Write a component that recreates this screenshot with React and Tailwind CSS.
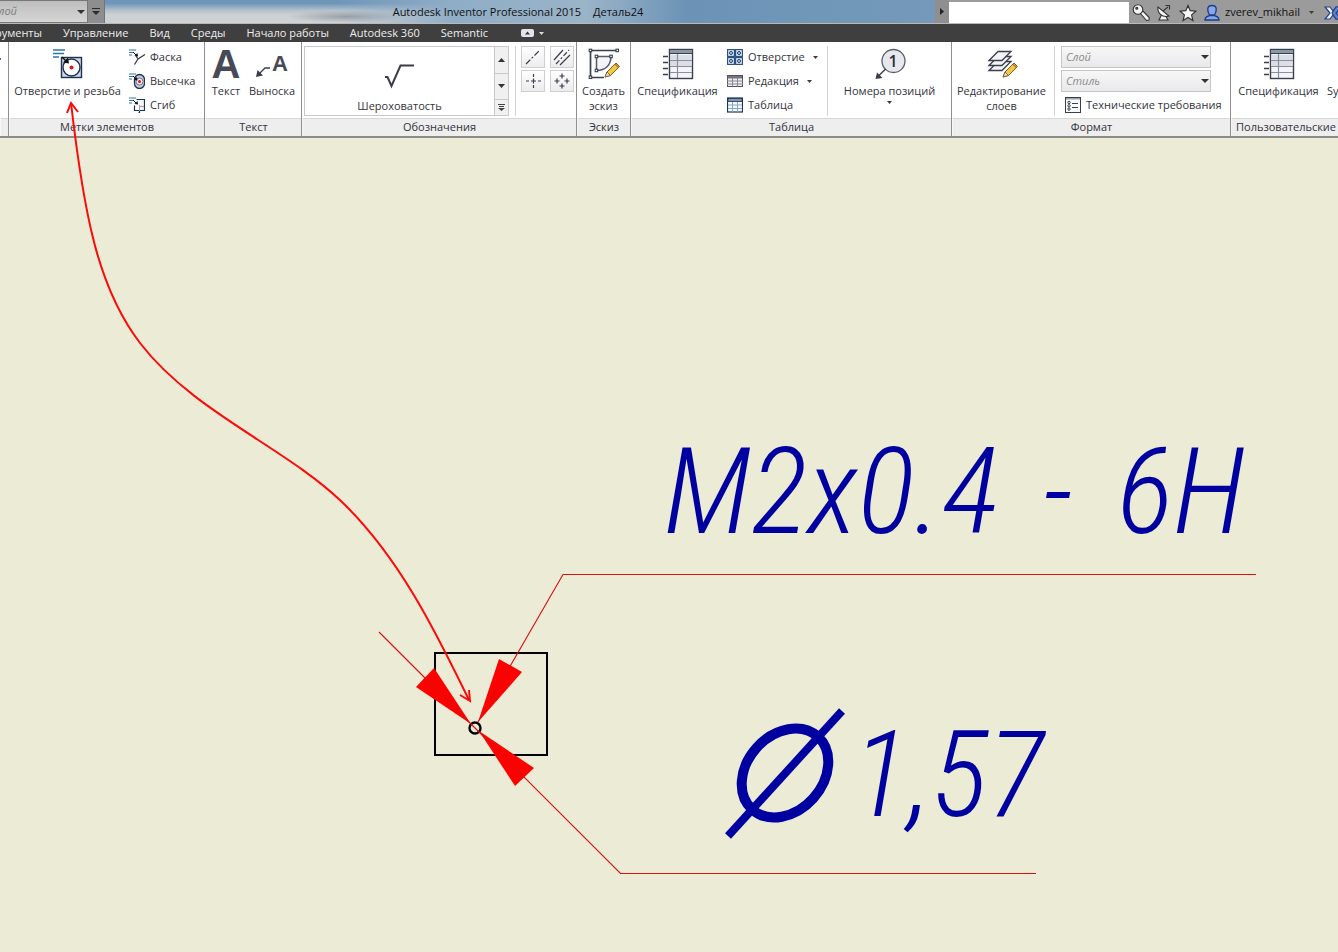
import React, { useState } from 'react';

const INK = '#3b3e4c';
const NAVY = '#1f3150';

function Caret({ className = '' }) {
  return (
    <svg width="5" height="3" viewBox="0 0 5 3" className={className} aria-hidden="true">
      <path d="M0 0h5L2.5 3z" fill="#3c3c3c" />
    </svg>
  );
}

function HoleIcon() {
  return (
    <svg width="32" height="32" viewBox="0 0 32 32" fill="none">
      <path d="M1 2h12M1 5.5h11M1 9h6" stroke="#2a76ae" strokeWidth="1.6" />
      <rect x="9.5" y="9.5" width="20" height="20" fill="#cfd5e4" stroke={NAVY} strokeWidth="1.4" />
      <circle cx="19.5" cy="19.5" r="8.5" fill="#fff" stroke={NAVY} strokeWidth="1.4" />
      <circle cx="19.5" cy="19.5" r="2" fill="#d41a1a" />
      <path d="M10 9l5 5" stroke="#111" strokeWidth="1.4" />
      <path d="M17 15.5l-6-1 5-5z" fill="#111" />
    </svg>
  );
}

function ChamferIcon() {
  return (
    <svg width="16" height="16" viewBox="0 0 16 16" fill="none">
      <path d="M0 1h7M0 3.5h5M0 6h3" stroke="#2a76ae" />
      <path d="M16 5.5L9 10 5.5 15.5M9 10L7 7" stroke={INK} strokeWidth="1.3" />
      <path d="M4 3l3 3" stroke="#111" />
      <path d="M9 7.5L5.5 7l3-3z" fill="#111" />
    </svg>
  );
}

function PunchIcon() {
  return (
    <svg width="16" height="16" viewBox="0 0 16 16" fill="none">
      <path d="M0 1h7M0 3.5h5M0 6h3" stroke="#2a76ae" />
      <rect x="5.5" y="1.5" width="10" height="14" rx="5" fill="#c5cad6" stroke={NAVY} strokeWidth="1.3" />
      <circle cx="10.5" cy="8.5" r="3.5" fill="#eef" stroke="#6d7486" />
      <circle cx="10.5" cy="8.5" r="1.5" fill="#d41a1a" />
      <path d="M4 3l3 3" stroke="#111" />
      <path d="M8.5 7.5L5 7l3-3z" fill="#111" />
    </svg>
  );
}

function BendIcon() {
  return (
    <svg width="16" height="16" viewBox="0 0 16 16" fill="none">
      <path d="M0 1h7M0 3.5h5M0 6h3" stroke="#2a76ae" />
      <path d="M7.500 2.5h8v11h-5" stroke={NAVY} strokeWidth="1.2" fill="#f2f4f8" />
      <path d="M5.5 8.500v5h5v2h-1" stroke={NAVY} strokeWidth="1.2" />
      <path d="M10.5 8v6M10.5 9.5h4.5" stroke="#9aa0ae" />
      <path d="M4 3l3 3" stroke="#111" />
      <path d="M9 7.5L5.5 7l3-3z" fill="#111" />
    </svg>
  );
}

function Pencil() {
  return (
    <g>
      <path d="M17 29l2-5 9-9 3.5 3.5-9 9z" fill="#f3c944" stroke="#7a5d20" />
      <path d="M17 29l2-5 3.5 3.5z" fill="#f2dcc0" stroke="#6b5640" strokeWidth=".8" />
      <path d="M27 16l3.5 3.5" stroke="#b9762c" strokeWidth="1.5" />
    </g>
  );
}

function SketchIcon() {
  return (
    <svg width="32" height="32" viewBox="0 0 32 32" fill="none">
      <path d="M29 2.5H2.5v27H16" stroke={INK} strokeWidth="1.7" />
      <path d="M8.5 8.5H23c0 8-5 14-14.5 14z" stroke="#555a70" strokeWidth="1.5" fill="#f4f4f8" />
      <g fill="#fff" stroke={INK} strokeWidth="1.1">
        <rect x="1.2" y="1.2" width="2.5" height="2.5" />
        <rect x="28" y="1.2" width="2.5" height="2.5" />
        <rect x="1.2" y="28" width="2.5" height="2.5" />
        <rect x="7.2" y="7.2" width="2.5" height="2.5" />
        <rect x="21.8" y="7.2" width="2.5" height="2.5" />
        <rect x="7.2" y="21.2" width="2.5" height="2.5" />
      </g>
      <Pencil />
    </svg>
  );
}

function PartsListIcon() {
  return (
    <svg width="32" height="32" viewBox="0 0 32 32" fill="none">
      <path d="M1 8.5h5M1 14.5h5M1 20.5h5M1 26.5h5" stroke={INK} strokeWidth="1.3" />
      <rect x="7.5" y="1.5" width="23" height="29" fill="#f4f5f8" stroke={INK} strokeWidth="1.4" />
      <path d="M7.5 1.5h23v4h-23z" fill="#8798a6" stroke={INK} />
      <path d="M8.5 7h21v11h-21z" fill="#dcdee6" />
      <path d="M8 12.5h22M8 18.5h22M8 24.5h22M15.5 6v24" stroke="#8b8f9d" strokeWidth="1.2" />
    </svg>
  );
}

function HoleTableIcon() {
  return (
    <svg width="16" height="16" viewBox="0 0 16 16" fill="none">
      {[[0, 0], [8, 0], [0, 8], [8, 8]].map(([x, y]) => (
        <g key={`${x}-${y}`}>
          <rect x={x + 0.6} y={y + 0.6} width="6.8" height="6.8" fill="#dbe7f7" stroke="#21497c" strokeWidth="1.1" />
          <circle cx={x + 4} cy={y + 4} r="1.5" stroke="#173a68" />
        </g>
      ))}
    </svg>
  );
}

function RevisionIcon() {
  return (
    <svg width="16" height="16" viewBox="0 0 16 16" fill="none">
      <rect x=".5" y="2.5" width="15" height="11" fill="#f1eef0" stroke="#54525e" />
      <path d="M1 3h14v2.5H1z" fill="#77737f" />
      <path d="M0 8h16M0 11h16M5.5 5v8.5M10.5 5v8.5" stroke="#8a8692" />
    </svg>
  );
}

function TableIcon() {
  return (
    <svg width="16" height="16" viewBox="0 0 16 16" fill="none">
      <rect x=".5" y="1" width="15" height="14" fill="#f7fafd" stroke={NAVY} strokeWidth="1.2" />
      <path d="M1 1.5h14v3H1z" fill="#7d98b2" stroke={NAVY} strokeWidth=".8" />
      <path d="M1 8h14M1 11.5h14M5.5 5v10M10.5 5v10" stroke="#87a6c6" />
    </svg>
  );
}

function BalloonIcon() {
  return (
    <div className="relative h-8 w-8">
      <svg width="32" height="32" viewBox="0 0 32 32" fill="none">
        <circle cx="19.5" cy="13" r="11.5" fill="#e6e8ee" stroke="#5a5d68" strokeWidth="1.3" />
        <path d="M11.5 21l-7 7" stroke={INK} strokeWidth="1.5" />
        <path d="M1.5 31L3 24.5l5.5 5.5z" fill={INK} />
      </svg>
      <span className="absolute left-[15px] top-1 text-base font-semibold leading-[18px] text-[#2c2e38]">1</span>
    </div>
  );
}

function LayersIcon() {
  return (
    <svg width="32" height="32" viewBox="0 0 32 32" fill="none">
      <g fill="#f3f4f7" stroke={INK} strokeWidth="1.3">
        <path d="M3 22.5l9-9h13l-9 9z" />
        <path d="M3 17.5l9-9h13l-9 9z" />
        <path d="M3 12.5l9-9h13l-9 9z" />
      </g>
      <Pencil />
    </svg>
  );
}

function RequirementsIcon() {
  return (
    <svg width="16" height="16" viewBox="0 0 16 16" fill="none">
      <rect x=".5" y=".5" width="15" height="15" fill="#fbfbfc" stroke={INK} />
      <path d="M1 1h14v1.5H1z" fill="#9a9dab" />
      <circle cx="4" cy="5.5" r="1.2" stroke={INK} />
      <circle cx="4" cy="8.8" r="1.2" stroke={INK} />
      <circle cx="4" cy="12.1" r="1.2" stroke={INK} />
      <path d="M7 6.5h6M7 10.5h6" stroke={INK} />
    </svg>
  );
}

function BigButton({ icon, label, lines, caret, className = '' }) {
  return (
    <button className={`flex shrink-0 flex-col items-center pt-[6px] ${className}`}>
      {icon}
      <span className="mt-[3px] whitespace-nowrap leading-[15px]">{label}</span>
      {lines && <span className="whitespace-nowrap leading-[15px]">{lines}</span>}
      {caret && <Caret className="mt-[3px]" />}
    </button>
  );
}

function SmallButton({ icon, label, caret }) {
  return (
    <button className="flex h-6 items-center gap-1 whitespace-nowrap">
      {icon}
      <span className="ml-px">{label}</span>
      {caret && <Caret className="ml-1" />}
    </button>
  );
}

function Panel({ title, className = '', children }) {
  return (
    <section className={`flex shrink-0 flex-col border-r border-[#8f8f8f] ${className}`}>
      <div className="flex h-[76px] bg-white">{children}</div>
      <h2 className="ml-px h-[18px] overflow-hidden whitespace-nowrap border-t border-[#d8d8d8] bg-[#eeeeee] text-center leading-[15px]">
        {title}
      </h2>
    </section>
  );
}

function LayerSelect({ label }) {
  return (
    <div className="relative h-[22px] w-[150px] shrink-0">
      <select
        aria-label={label}
        className="h-full w-full appearance-none border border-[#c6c6c6] bg-linear-to-b from-[#f7f7f7] to-[#e9e9ec] pl-1 italic text-[#8a8a8a] outline-none"
      >
        <option>{label}</option>
      </select>
      <svg width="8" height="4" viewBox="0 0 8 4" className="pointer-events-none absolute right-[2px] top-[9px]">
        <path d="M0 0h8L4 4z" fill="#333" />
      </svg>
    </div>
  );
}

function ToolButton({ label, children }) {
  return (
    <button aria-label={label} className="flex h-[22px] w-6 items-center justify-center border border-[#cfcfcf] bg-linear-to-b from-white to-[#ececee]">
      <svg width="18" height="18" viewBox="0 0 18 18" fill="none" stroke={INK} strokeWidth="1.2">
        {children}
      </svg>
    </button>
  );
}

function TitleBar() {
  return (
    <header className="flex h-6 border-b border-[#b9b9b9] bg-[#9b9b9b] text-[#111]">
      <div className="flex w-[105px] shrink-0 border-r border-[#6d7680]">
        <div className="relative flex w-[88px] overflow-hidden border-y border-r border-[#777] bg-linear-to-b from-[#bdbdbd] to-[#d6d6d6]">
          <select aria-label="Слой" className="-ml-2 h-full w-24 appearance-none italic text-[#7d7d7d] outline-none">
            <option>Слой</option>
          </select>
          <svg width="8" height="4" viewBox="0 0 8 4" className="pointer-events-none absolute right-[2px] top-[9px]">
            <path d="M0 0h8L4 4z" fill="#333" />
          </svg>
        </div>
        <button aria-label="Настройка панели" className="flex flex-1 items-center justify-center bg-[#8e8e8e]">
          <svg width="8" height="7" viewBox="0 0 8 7">
            <path d="M0 0h8v1H0zM0 3h8L4 7z" fill="#2b2b2b" />
          </svg>
        </button>
      </div>
      <div className="flex flex-1 justify-center gap-3 overflow-hidden whitespace-nowrap bg-[radial-gradient(ellipse_60px_6px_at_29%_72%,#7f8a94b0,transparent),linear-gradient(to_right,#8fadc600_28%,#8fadc6_42%,#9ab4c8_58%,#6c93b6_70%,#7499ba_100%),linear-gradient(to_bottom,#6f96b9_15%,#b4c1cb_45%,#cfd2d4_65%)] pr-1">
        <h1 className="leading-6">Autodesk Inventor Professional 2015</h1>
        <span className="leading-6">Деталь24</span>
      </div>
      <div className="flex w-[403px] shrink-0 items-center overflow-hidden">
        <button aria-label="Развернуть поиск" className="flex h-full w-[14px] shrink-0 items-center justify-center bg-[#8f8f8f]">
          <svg width="4" height="7" viewBox="0 0 4 7">
            <path d="M0 0v7l4-3.5z" fill="#222" />
          </svg>
        </button>
        <input aria-label="Поиск" className="mt-[2px] h-[21px] w-[180px] shrink-0 bg-white px-1 outline-none" />
        <div className="flex shrink-0 items-center pl-[3px] pt-[2px]">
          <button aria-label="Ключ">
            <svg width="18" height="18" viewBox="0 0 18 18" fill="#f4f4f4" stroke="#333" strokeWidth="1.1">
              <path d="M8 9l6.500 7.500 2.500-.5.2-2.500L10.500 6.500z" />
              <circle cx="6" cy="5.5" r="4.8" />
              <circle cx="4.8" cy="4.3" r="1" fill="#777" />
            </svg>
          </button>
          <button aria-label="Связь" className="ml-[6px]">
            <svg width="16" height="18" viewBox="0 0 16 18" fill="#f4f4f4" stroke="#333" strokeWidth="1.1">
              <path d="M6 10l-3 6h9l-3-5z" />
              <path d="M2 3c-1 6 4 11 11 9z" />
              <path d="M7 7l5-4" />
              <path d="M9.5 1.500h4v4" fill="none" />
            </svg>
          </button>
          <button aria-label="Избранное" className="ml-[7px]">
            <svg width="18" height="18" viewBox="0 0 18 18" fill="#f6f6f6" stroke="#333" strokeWidth="1.2">
              <path d="M9 1.5l2.2 5.2 5.6.5-4.2 3.7 1.3 5.6L9 13.5l-4.900 3 1.3-5.600L1.200 7.200l5.6-.5z" />
            </svg>
          </button>
          <button className="ml-[7px] flex items-center gap-[5px]">
            <svg width="16" height="18" viewBox="0 0 16 18" fill="#86a8ea" stroke="#1d3b86" strokeWidth="1.3">
              <path d="M1 16c0-3 2-3.5 5-4.5h4c3 1 5 1.5 5 4.5z" />
              <path d="M8 1.5c6 0 4.5 6 2.5 9.5h-5C3.5 7.5 2 1.5 8 1.5z" />
            </svg>
            <span>zverev_mikhail</span>
            <Caret className="ml-1" />
          </button>
          <button aria-label="Exchange" className="ml-[10px]">
            <svg width="20" height="14" viewBox="0 0 20 14" fill="none" strokeWidth="1.2">
              <path d="M1 1h5l3 4 3-4h5l-5 6 5 6h-5L9 9l-3 4H1l5-6z" fill="#eef1f8" stroke="#23418c" />
              <path d="M12 1h5l-5 6 5 6h-5L8 7z" fill="#5c82d0" stroke="#23418c" />
            </svg>
          </button>
        </div>
      </div>
    </header>
  );
}

const tabs = ['Управление', 'Вид', 'Среды', 'Начало работы', 'Autodesk 360', 'Semantic'];

function TabBar() {
  const [active, setActive] = useState(null);
  return (
    <nav className="flex h-[18px] items-center gap-[21px] overflow-hidden whitespace-nowrap bg-[#3f3f3f] text-[#eeeeee]">
      <div className="flex w-[42px] shrink-0 justify-end overflow-hidden">
        <button onClick={() => setActive('Инструменты')}>Инструменты</button>
      </div>
      {tabs.map((tab) => (
        <button key={tab} onClick={() => setActive(tab)} aria-pressed={active === tab} className="leading-[18px]">
          {tab}
        </button>
      ))}
      <button aria-label="Свернуть ленту" className="ml-3 flex items-center gap-[5px]">
        <svg width="13" height="8" viewBox="0 0 13 8">
          <rect width="13" height="8" rx="2" fill="#e4e2ea" />
          <path d="M4 5.5h5L6.5 2.5z" fill="#333" />
        </svg>
        <svg width="5" height="3" viewBox="0 0 5 3">
          <path d="M0 0h5L2.5 3z" fill="#ddd" />
        </svg>
      </button>
    </nav>
  );
}

function Ribbon() {
  return (
    <div className="flex overflow-hidden border-b-2 border-[#8d8d88] bg-[#f6f6f6] text-[#33343c]">
      <Panel className="w-[9px]" title="">
        <span className="mt-4 h-[2px] w-px bg-[#2a76ae]" />
      </Panel>

      <Panel className="w-[196px]" title="Метки элементов">
        <BigButton className="w-[117px]" icon={<HoleIcon />} label="Отверстие и резьба" />
        <div className="ml-[3px] flex flex-col pt-[3px]">
          <SmallButton icon={<ChamferIcon />} label="Фаска" />
          <SmallButton icon={<PunchIcon />} label="Высечка" />
          <SmallButton icon={<BendIcon />} label="Сгиб" />
        </div>
      </Panel>

      <Panel className="w-[97px]" title="Текст">
        <BigButton
          className="w-[42px]"
          icon={<span className="h-8 font-['Liberation_Sans'] text-[40px] font-bold leading-8 text-[#474956]">А</span>}
          label="Текст"
        />
        <BigButton
          className="w-[50px]"
          icon={
            <span className="relative h-8 w-8">
              <span className="absolute left-4 top-0 font-['Liberation_Sans'] text-[22px] font-bold leading-8 text-[#474956]">А</span>
              <svg width="32" height="32" viewBox="0 0 32 32" fill="none">
                <path d="M14 20h-5l-6 6" stroke={INK} strokeWidth="1.3" />
                <path d="M0 29l1.5-7 5.5 5.5z" fill={INK} />
              </svg>
            </span>
          }
          label="Выноска"
        />
      </Panel>

      <Panel className="w-[275px]" title="Обозначения">
        <div className="ml-[2px] mt-1 flex h-[70px] w-[205px] border border-[#c9c9c9]">
          <button className="flex flex-1 flex-col items-center justify-between pt-4">
            <svg width="32" height="26" viewBox="0 0 32 26" fill="none">
              <path d="M1 14h2.500l4 9L16.500 2.5H30" stroke="#3a3c46" strokeWidth="2" />
            </svg>
            <span className="leading-[18px]">Шероховатость</span>
          </button>
          <div className="flex w-[14px] flex-col divide-y divide-[#c9c9c9] border-l border-[#c9c9c9] bg-[#f0f0f1]">
            <button aria-label="Вверх" className="flex flex-1 items-center justify-center">
              <svg width="7" height="4" viewBox="0 0 7 4"><path d="M0 4h7L3.5 0z" fill="#333" /></svg>
            </button>
            <button aria-label="Вниз" className="flex flex-1 items-center justify-center">
              <svg width="7" height="4" viewBox="0 0 7 4"><path d="M0 0h7L3.5 4z" fill="#333" /></svg>
            </button>
            <button aria-label="Все обозначения" className="flex h-[15px] items-center justify-center">
              <svg width="7" height="7" viewBox="0 0 7 7"><path d="M0 0h7v1H0zM1 2h5v1H1zM0 4h7L3.5 7z" fill="#444" /></svg>
            </button>
          </div>
        </div>
        <div className="ml-[6px] mt-1 grid h-[70px] grid-cols-2 content-start gap-x-[5px] gap-y-[2px] border-l border-[#d4d4d4] pl-[5px]">
          <ToolButton label="Осевая линия">
            <path d="M2 16L16 2" strokeDasharray="6 2 2 2" />
          </ToolButton>
          <ToolButton label="Средняя линия">
            <path d="M1 12L10 2M7 17L17 7" />
            <path d="M3 16L16 2" strokeDasharray="5 2 2 2" />
          </ToolButton>
          <ToolButton label="Маркер центра">
            <path d="M2 9h3M7 9h5M14 9h3M9.5 2v3M9.5 6.5v5M9.5 13v3" />
          </ToolButton>
          <ToolButton label="Массив центров">
            <path d="M9 1.5v5M6.5 4h5M9 11.5v5M6.5 14h5M1.5 9h5M4 6.5v5M11.5 9h5M14 6.5v5" />
          </ToolButton>
        </div>
      </Panel>

      <Panel className="w-[54px]" title="Эскиз">
        <BigButton className="w-full" icon={<SketchIcon />} label="Создать" lines="эскиз" />
      </Panel>

      <Panel className="w-[321px]" title="Таблица">
        <BigButton className="w-[93px]" icon={<PartsListIcon />} label="Спецификация" />
        <div className="ml-[3px] mt-1 flex h-[70px] w-[101px] flex-col border-r border-[#d4d4d4]">
          <div className="-mt-px">
            <SmallButton icon={<HoleTableIcon />} label="Отверстие" caret />
            <SmallButton icon={<RevisionIcon />} label="Редакция" caret />
            <SmallButton icon={<TableIcon />} label="Таблица" />
          </div>
        </div>
        <BigButton className="flex-1" icon={<BalloonIcon />} label="Номера позиций" caret />
      </Panel>

      <Panel className="w-[279px]" title="Формат">
        <BigButton className="w-[99px]" icon={<LayersIcon />} label="Редактирование" lines="слоев" />
        <div className="ml-[3px] mt-1 flex h-[70px] flex-col gap-[2px] border-l border-[#d4d4d4] pl-[6px]">
          <LayerSelect label="Слой" />
          <LayerSelect label="Стиль" />
          <div className="flex h-[22px] shrink-0 items-center pl-1">
            <SmallButton icon={<RequirementsIcon />} label="Технические требования" />
          </div>
        </div>
      </Panel>

      <section className="flex flex-1 flex-col overflow-hidden">
        <div className="flex h-[76px] bg-white">
          <BigButton className="w-[95px]" icon={<PartsListIcon />} label="Спецификация" />
          <BigButton className="ml-px" icon={<span className="h-8" />} label="Symbols" />
        </div>
        <h2 className="ml-px h-[18px] whitespace-nowrap border-t border-[#d8d8d8] bg-[#eeeeee] pl-1 leading-[15px]">
          Пользовательские
        </h2>
      </section>
    </div>
  );
}

// Coordinates in the svg count from the top of the window, so the arrow can reach into the ribbon.
function Sheet() {
  return (
    <main className="relative min-h-[814px] flex-1 bg-[#ecebd6]">
      <svg
        width="1338"
        height="952"
        viewBox="0 0 1338 952"
        fill="none"
        className="pointer-events-none absolute -top-[138px] left-0 max-w-none"
      >
        <rect x="435" y="653" width="112" height="102" stroke="#000" strokeWidth="2" />
        <g fill="#ff0000">
          <path d="M471 724L416 687 434 668z" />
          <path d="M478 722L499 659 522 672z" />
          <path d="M479 731L534 768 515 786z" />
        </g>
        <circle cx="475" cy="728" r="5.5" stroke="#000" strokeWidth="2.4" />
        <g stroke="#d81010" strokeWidth="1.1">
          <path d="M379 632L475 728" />
          <path d="M478 722L563 574.5H1256" />
          <path d="M475 728L620.5 873.5H1036" />
        </g>
        <path
          d="M71 103C84 215 98 288 140 343C193 412 285 447 342 502C398 556 434 628 469 700"
          stroke="#fb0a0a"
          strokeWidth="2"
        />
        <path d="M67 113L71 103 78 112M460 695L470 701 469 690" stroke="#fb0a0a" strokeWidth="2" />
        <g stroke="#0000a0">
          <ellipse cx="785" cy="773" rx="49" ry="38" strokeWidth="10" transform="rotate(-48 785 773)" />
          <path d="M728 836L842 711" strokeWidth="8" />
        </g>
      </svg>
      <p className="absolute left-[664px] top-[294px] flex gap-11 whitespace-nowrap font-['Roboto_Condensed','Roboto',sans-serif] text-[120px] font-light italic leading-[120px] text-[#0000a0]">
        <span>M2x0.4</span>
        <span>-</span>
        <span>6H</span>
      </p>
      <p className="absolute left-[852px] top-[577px] whitespace-nowrap font-['Roboto_Condensed','Roboto',sans-serif] text-[120px] font-light italic leading-[120px] text-[#0000a0]">
        1,57
      </p>
    </main>
  );
}

function App() {
  return (
    <div className="flex min-h-screen flex-col overflow-hidden font-['Open_Sans','Noto_Sans',sans-serif] text-[11px]">
      <TitleBar />
      <TabBar />
      <Ribbon />
      <Sheet />
    </div>
  );
}

export default App;
